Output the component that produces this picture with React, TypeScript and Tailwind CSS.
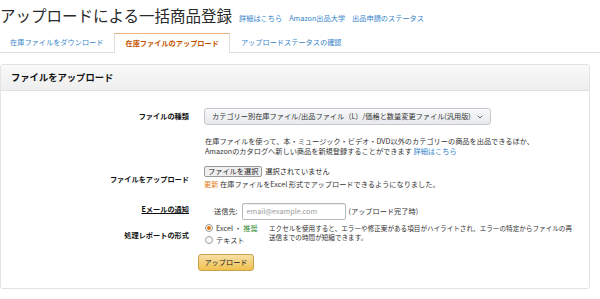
import React from "react";

export default function App() {
  return (
    <div className="w-[600px] h-[299px] bg-white overflow-hidden text-[#333] font-['Noto_Sans_CJK_JP','Noto_Sans',sans-serif]">
      {/* Title */}
      <div className="flex items-center h-[31px] pt-[1px]">
        <h1 className="text-[15.5px] leading-none text-[#2a2a2a] font-normal whitespace-nowrap">アップロードによる一括商品登録</h1>
        <div className="flex gap-[7px] ml-[7px] mt-[5px] text-[7.2px] leading-none text-[#3584c9] whitespace-nowrap">
          <span>詳細はこちら</span>
          <span>Amazon出品大学</span>
          <span>出品申請のステータス</span>
        </div>
      </div>
      {/* Tabs */}
      <div className="mt-[2px] flex h-[20px] border-b border-[#dddddd] text-[7.2px] leading-none whitespace-nowrap">
        <div className="flex items-center pl-[10px] pr-[11px] text-[#3584c9]">在庫ファイルをダウンロード</div>
        <div className="flex items-center px-[10px] h-[20px] bg-white border border-b-0 border-[#dddddd] border-t-[#f0b27a] text-[#c45500] font-bold">在庫ファイルのアップロード</div>
        <div className="flex items-center px-[11px] text-[#3584c9]">アップロードステータスの確認</div>
      </div>
      {/* Panel */}
      <div className="mt-[11px] w-[590px] h-[225px] border border-[#e3e3e3] rounded-[3px] overflow-hidden">
        <div className="h-[26px] flex items-center pl-[10px] bg-gradient-to-b from-[#f9f9f9] to-[#eeeeee] border-b border-[#e0e0e0]">
          <span className="text-[9.3px] leading-none font-bold text-[#111]">ファイルをアップロード</span>
        </div>
        <div className="pt-[17px] text-[7.2px] leading-none">
          {/* Row 1 */}
          <div className="flex items-center">
            <div className="w-[188px] text-right font-bold text-[#111]">ファイルの種類</div>
            <div className="ml-[15px] h-[17px] w-[287px] flex items-center justify-between pl-[7px] pr-[7px] rounded-[3px] border border-[#c5c8cd] bg-gradient-to-b from-[#f7f8fa] to-[#e7e9ec] shadow-[0_1px_0_rgba(255,255,255,0.6)_inset] whitespace-nowrap">
              <span>カテゴリー別在庫ファイル/出品ファイル（L）/価格と数量変更ファイル(汎用版)</span>
              <svg width="6" height="4" viewBox="0 0 6 4"><path d="M0.8 0.8 L3 3 L5.2 0.8" stroke="#555" strokeWidth="0.9" fill="none" /></svg>
            </div>
          </div>
          <div className="ml-[204px] mt-[11px] leading-[10px] whitespace-nowrap">
            <div>在庫ファイルを使って、本・ミュージック・ビデオ・DVD以外のカテゴリーの商品を出品できるほか、</div>
            <div>Amazonのカタログへ新しい商品を新規登録することができます <span className="text-[#3584c9]">詳細はこちら</span></div>
          </div>
          {/* Row 2 */}
          <div className="flex items-center mt-[10px]">
            <div className="w-[188px] text-right font-bold text-[#111] pt-[4px]">ファイルをアップロード</div>
            <div className="ml-[15px]">
              <div className="flex items-center">
                <div className="h-[11px] px-[3px] flex items-center border border-[#9a9a9a] rounded-[2px] bg-[#efefef] text-[#222]">ファイルを選択</div>
                <span className="ml-[3px] text-[#222]">選択されていません</span>
              </div>
              <div className="mt-[4px] whitespace-nowrap"><span className="text-[#e47911]">更新</span> 在庫ファイルをExcel 形式でアップロードできるようになりました。</div>
            </div>
          </div>
          {/* Row 3 */}
          <div className="flex items-center mt-[15px]">
            <div className="w-[188px] text-right font-bold text-[#111] underline underline-offset-[1px] -mt-[4px]">Eメールの通知</div>
            <div className="ml-[25px] flex items-center">
              <span>送信先:</span>
              <div className="ml-[4px] w-[104px] h-[17px] flex items-center pl-[4px] border border-[#b9b9b9] rounded-[2px] text-[#999] shadow-[inset_0_1px_1px_rgba(0,0,0,0.08)]">email@example.com</div>
              <span className="ml-[3px]">(アップロード完了時)</span>
            </div>
          </div>
          {/* Row 4 */}
          <div className="flex items-center mt-[4px]">
            <div className="w-[188px] text-right font-bold text-[#111] pt-[3px]">処理レポートの形式</div>
            <div className="ml-[16px] flex items-start">
              <div className="flex flex-col gap-[4px] w-[64px]">
                <div className="flex items-center gap-[3px] h-[8px]">
                  <span className="w-[8px] h-[8px] rounded-full border border-[#9a9a9a] bg-white flex items-center justify-center">
                    <span className="w-[4px] h-[4px] rounded-full bg-[#e47911]"></span>
                  </span>
                  <span>Excel ・ <span className="text-[#2a8a2a]">推奨</span></span>
                </div>
                <div className="flex items-center gap-[3px] h-[8px]">
                  <span className="w-[8px] h-[8px] rounded-full border border-[#9a9a9a] bg-white"></span>
                  <span>テキスト</span>
                </div>
              </div>
              <div className="-mt-[0.5px] text-[6.6px] leading-[9.6px] whitespace-nowrap">
                <div>エクセルを使用すると、エラーや修正案がある項目がハイライトされ、エラーの特定からファイルの再</div>
                <div>送信までの時間が短縮できます。</div>
              </div>
            </div>
          </div>
          {/* Upload button */}
          <div className="ml-[197px] mt-[10px]">
            <div className="w-[56px] h-[17px] flex items-center justify-center rounded-[3px] border border-[#c8a24a] bg-gradient-to-b from-[#f7dfa5] to-[#f0c14b] text-[#222]">アップロード</div>
          </div>
        </div>
      </div>
    </div>
  );
}
